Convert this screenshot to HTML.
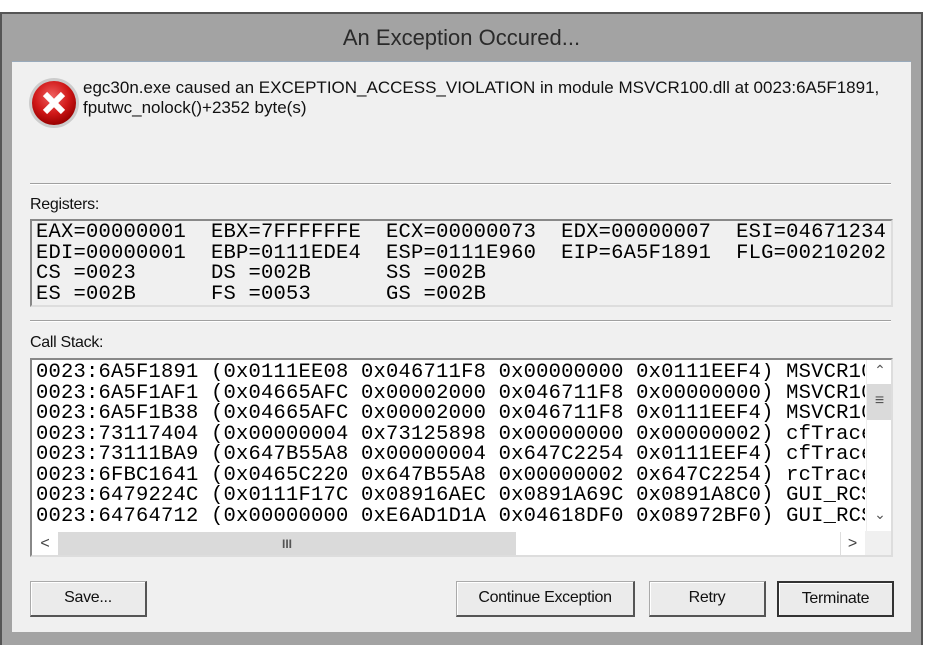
<!DOCTYPE html>
<html><head><style>
*{margin:0;padding:0;box-sizing:border-box}
body{width:930px;height:645px;background:#fff;position:relative;overflow:hidden;font-family:"Liberation Sans",Arial,sans-serif}
.abs{position:absolute}
.win{left:0;top:12px;width:923px;height:633px;background:#a3a3a3;border:2px solid #555;border-bottom:none}
.title{left:0;top:12px;width:923px;height:50px;text-align:center;line-height:52px;font-size:22px;color:#2a2a2a}
.client{left:12px;top:61px;width:899px;height:571px;background:#f0f0f0;border-top:1px solid #9ab}
.txt{font-size:16px;color:#111;letter-spacing:-0.3px}
.sep{height:1px;background:#a0a0a0;border-bottom:1px solid #fff;box-sizing:content-box}
.box{border:2px solid #888;border-right-color:#ddd;border-bottom-color:#ddd;background:#f0f0f0}
.mono{font-family:"Liberation Mono","Courier New",monospace;font-size:20.5px;line-height:20.5px;white-space:pre;color:#000;letter-spacing:0.2px}
.btn{height:36px;background:#ebebeb;border:1px solid #aaa;border-right:2px solid #555;border-bottom:2px solid #555;font-size:16px;text-align:center;line-height:32px;color:#111;letter-spacing:-0.3px;box-shadow:inset 1px 1px 0 #fff}
</style></head><body>
<div class="abs win"></div>
<div class="abs title">An Exception Occured...</div>
<div class="abs client"></div>
<svg class="abs" style="left:28px;top:77px" width="52" height="52" viewBox="0 0 52 52">
<defs><radialGradient id="g" cx="45%" cy="35%" r="65%"><stop offset="0" stop-color="#f06060"/><stop offset="0.6" stop-color="#d01818"/><stop offset="1" stop-color="#900"/></radialGradient></defs>
<circle cx="26" cy="26" r="25" fill="#ccc"/><circle cx="26" cy="26" r="22" fill="url(#g)"/>
<path d="M17 17L35 35M35 17L17 35" stroke="#fff" stroke-width="6" stroke-linecap="butt"/>
</svg>
<div class="abs" style="left:83px;top:78px;line-height:20px;font-size:17px;color:#111">egc30n.exe caused an EXCEPTION_ACCESS_VIOLATION in module MSVCR100.dll at 0023:6A5F1891,<br>fputwc_nolock()+2352 byte(s)</div>
<div class="abs sep" style="left:30px;top:183px;width:861px"></div>
<div class="abs txt" style="left:30px;top:196px">Registers:</div>
<div class="abs box" style="left:30px;top:219px;width:863px;height:88px"></div>
<div class="abs mono" style="left:36px;top:223px">EAX=00000001  EBX=7FFFFFFE  ECX=00000073  EDX=00000007  ESI=04671234
EDI=00000001  EBP=0111EDE4  ESP=0111E960  EIP=6A5F1891  FLG=00210202
CS =0023      DS =002B      SS =002B
ES =002B      FS =0053      GS =002B</div>
<div class="abs sep" style="left:30px;top:320px;width:861px"></div>
<div class="abs txt" style="left:30px;top:334px">Call Stack:</div>
<div class="abs box" style="left:30px;top:358px;width:863px;height:199px;background:#fff;overflow:hidden">
<div class="abs mono" style="left:4px;top:3px;width:829px;overflow:hidden">0023:6A5F1891 (0x0111EE08 0x046711F8 0x00000000 0x0111EEF4) MSVCR100
0023:6A5F1AF1 (0x04665AFC 0x00002000 0x046711F8 0x00000000) MSVCR100
0023:6A5F1B38 (0x04665AFC 0x00002000 0x046711F8 0x0111EEF4) MSVCR100
0023:73117404 (0x00000004 0x73125898 0x00000000 0x00000002) cfTrace
0023:73111BA9 (0x647B55A8 0x00000004 0x647C2254 0x0111EEF4) cfTrace
0023:6FBC1641 (0x0465C220 0x647B55A8 0x00000002 0x647C2254) rcTrace
0023:6479224C (0x0111F17C 0x08916AEC 0x0891A69C 0x0891A8C0) GUI_RCS
0023:64764712 (0x00000000 0xE6AD1D1A 0x04618DF0 0x08972BF0) GUI_RCS</div>
<div class="abs" style="left:834px;top:0;width:27px;height:171px;background:#fff;border-left:1px solid #eee"></div>
<div class="abs" style="left:836px;top:2px;width:24px;height:20px;color:#555;font-size:14px;text-align:center">&#8963;</div>
<div class="abs" style="left:835px;top:24px;width:25px;height:36px;background:#dadada;color:#555;font-size:16px;text-align:center;line-height:34px">&#8801;</div>
<div class="abs" style="left:836px;top:146px;width:24px;height:20px;color:#555;font-size:14px;text-align:center">&#8964;</div>
<div class="abs" style="left:0;top:171px;width:861px;height:26px;background:#f0f0f0"></div>
<div class="abs" style="left:0;top:171px;width:833px;height:26px;background:#fff"></div>
<div class="abs" style="left:2px;top:172px;width:22px;height:24px;color:#444;font-size:16px;text-align:center;line-height:24px">&lt;</div>
<div class="abs" style="left:26px;top:172px;width:458px;height:24px;background:#dadada;color:#555;font-size:12px;text-align:center;line-height:24px;font-weight:bold">III</div>
<div class="abs" style="left:808px;top:172px;width:24px;height:24px;color:#444;font-size:16px;text-align:center;line-height:24px;border-left:1px solid #ddd">&gt;</div>
</div>
<div class="abs btn" style="left:30px;top:581px;width:117px">Save...</div>
<div class="abs btn" style="left:456px;top:581px;width:179px">Continue Exception</div>
<div class="abs btn" style="left:649px;top:581px;width:117px">Retry</div>
<div class="abs btn" style="left:777px;top:581px;width:117px;border:2px solid #333">Terminate</div>
</body></html>
